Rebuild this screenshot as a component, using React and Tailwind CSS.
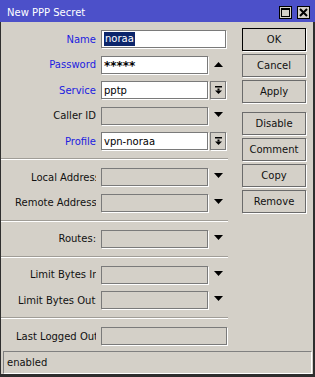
import React from "react";

const font = { fontFamily: '"DejaVu Sans", Verdana, sans-serif' };

function Arrow({ up }) {
  return (
    <svg width="9" height="5" viewBox="0 0 9 5" className="block">
      <polygon points={up ? "0,5 9,5 4.5,0" : "0,0 9,0 4.5,5"} fill="#000" />
    </svg>
  );
}

function DropButton() {
  return (
    <div className="ml-[2px] flex h-[18px] w-[16px] items-center justify-center border border-[#7a7a7a] shadow-[1px_1px_0_#fff]">
      <svg width="7" height="8" viewBox="0 0 7 8" className="block">
        <rect x="0" y="0" width="7" height="1.5" fill="#000" />
        <rect x="2.5" y="2.5" width="2" height="2" fill="#000" />
        <polygon points="0,4.5 7,4.5 3.5,8" fill="#000" />
      </svg>
    </div>
  );
}

function Field({ label, blue, value, enabled, width = "w-[107px]", after, selected, clip, stars }) {
  return (
    <div className="flex h-[18px] items-center pl-[11px]">
      <div
        className={
          "flex w-[84px] shrink-0 justify-end whitespace-nowrap " +
          (blue ? "text-[#1c1ce0]" : "text-[#111]")
        }
      >
        <span className={"inline-block shrink-0 overflow-hidden whitespace-nowrap " + (clip || "")}>{label}</span>
      </div>
      <div
        className={
          "ml-[5px] flex h-[18px] shrink-0 items-center border border-[#7a7a7a] pl-[2px] shadow-[1px_1px_0_#fff] " +
          width +
          (enabled ? " bg-white" : " bg-[#d4d0c8]")
        }
      >
        {selected ? (
          <span className="bg-[#0c256b] px-[1px] leading-[14px] text-white">{value}</span>
        ) : stars ? (
          <span className="pt-[3px] text-[12px] font-bold leading-[12px] text-black">{value}</span>
        ) : (
          <span className="text-black">{value}</span>
        )}
      </div>
      {after === "up" && (
        <div className="flex w-[20px] justify-center">
          <Arrow up />
        </div>
      )}
      {after === "down" && (
        <div className="flex w-[20px] justify-center pb-[3px]">
          <Arrow />
        </div>
      )}
      {after === "drop" && <DropButton />}
    </div>
  );
}

function Sep() {
  return <div className="my-[8px] h-[2px] border-t border-[#a09d97] border-b border-b-white" />;
}

function Btn({ children, primary, className = "" }) {
  return (
    <div
      className={
        "flex h-[23px] w-[64px] items-center justify-center text-[#111] shadow-[1px_1px_0_#fff] " +
        (primary ? "border border-black" : "border border-[#6b6b6b]") +
        " " +
        className
      }
    >
      {children}
    </div>
  );
}

export default function App() {
  return (
    <div className="flex h-[377px] w-[315px] flex-col bg-[#d4d0c8] text-[10px]" style={font}>
      <div className="flex h-[22px] items-center bg-[#4c50c9] pt-[3px] text-white">
        <span className="ml-[7px] flex-1">New PPP Secret</span>
        <div className="flex h-[13px] w-[13px] items-center justify-center border border-black bg-[#d4d0c8]">
          <svg width="9" height="9" viewBox="0 0 9 9" className="block">
            <rect x="0.5" y="0.5" width="8" height="8" fill="none" stroke="#000" />
            <rect x="0" y="0" width="9" height="2" fill="#000" />
          </svg>
        </div>
        <div className="ml-[5px] mr-[5px] flex h-[13px] w-[13px] items-center justify-center border border-black bg-[#d4d0c8]">
          <svg width="9" height="9" viewBox="0 0 9 9" className="block">
            <path d="M1 1L8 8M8 1L1 8" stroke="#000" strokeWidth="2" />
          </svg>
        </div>
      </div>

      <div className="flex flex-1 flex-col border-b-[3px] border-l border-r-2 border-[#2e2e2e]">
        <div className="flex flex-1">
          <div className="flex w-[227px] flex-col pt-[8px]">
            <div className="flex flex-col gap-[7.5px]">
              <Field label="Name" blue value="noraa" enabled selected width="w-[125px]" />
              <Field label="Password" blue value="*****" enabled stars after="up" />
              <Field label="Service" blue value="pptp" enabled after="drop" />
              <Field label="Caller ID" after="down" />
              <Field label="Profile" blue value="vpn-noraa" enabled after="drop" />
            </div>
            <Sep />
            <div className="flex flex-col gap-[7.5px]">
              <Field label="Local Address:" clip="w-[65px]" after="down" />
              <Field label="Remote Address:" clip="w-[81px]" after="down" />
            </div>
            <Sep />
            <Field label="Routes:" after="down" />
            <Sep />
            <div className="flex flex-col gap-[7.5px]">
              <Field label="Limit Bytes In:" clip="w-[66px]" after="down" />
              <Field label="Limit Bytes Out:" clip="w-[78px]" after="down" />
            </div>
            <Sep />
            <Field label="Last Logged Out:" clip="w-[80px]" width="w-[126px]" />
          </div>

          <div className="ml-[14px] flex flex-col gap-[3px] pt-[6px]">
            <Btn primary>OK</Btn>
            <Btn>Cancel</Btn>
            <Btn>Apply</Btn>
            <Btn className="mt-[6px]">Disable</Btn>
            <Btn>Comment</Btn>
            <Btn>Copy</Btn>
            <Btn>Remove</Btn>
          </div>
        </div>

        <div className="ml-[2px] mr-[1px] flex h-[23px] items-center border-l border-t border-[#808080] border-b border-b-white border-r border-r-white pl-[3px] text-[#111]">
          enabled
        </div>
      </div>
    </div>
  );
}
